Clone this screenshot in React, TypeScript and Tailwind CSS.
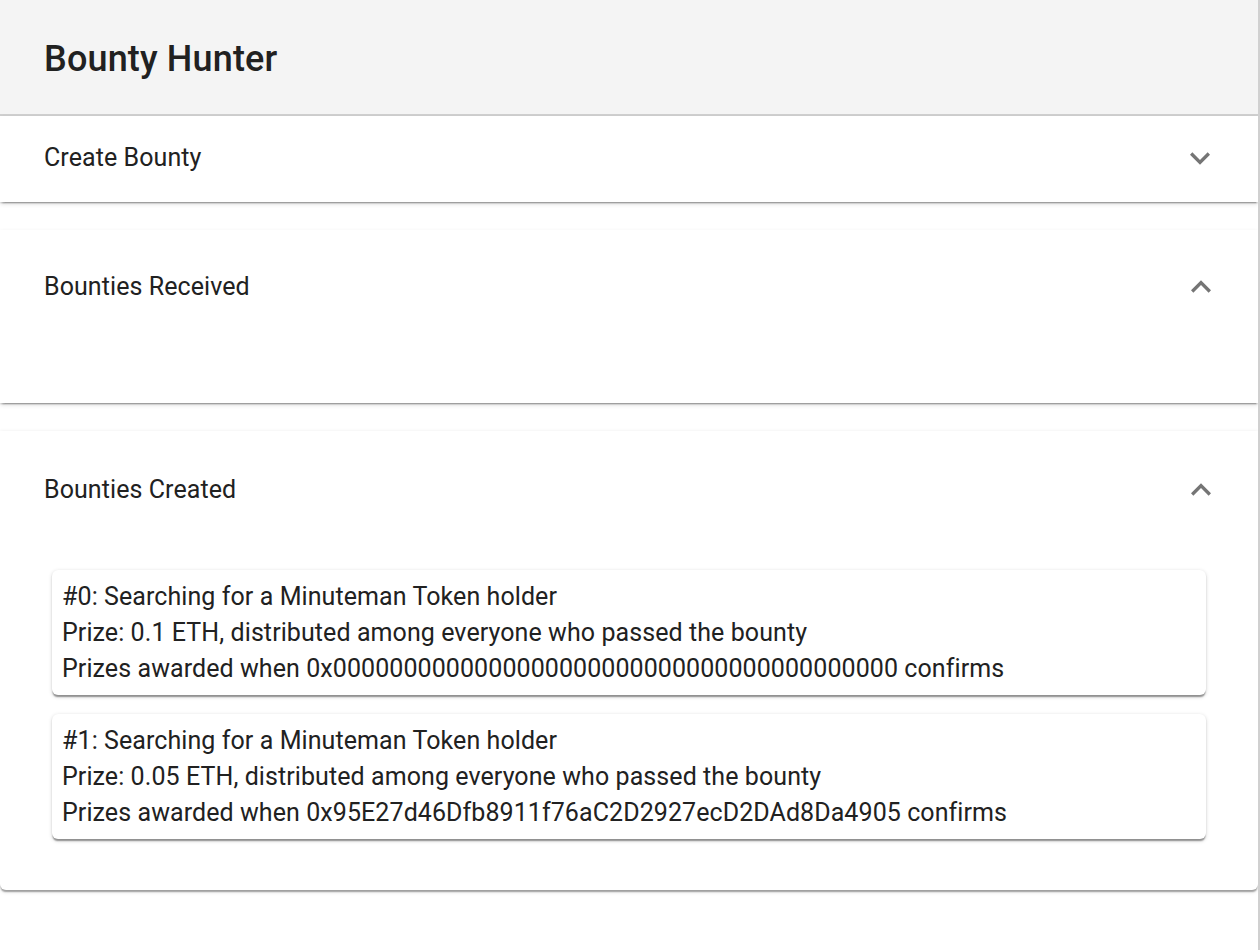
import React from "react";

const ExpandMore = () => (
  <svg viewBox="0 0 24 24" width="40" height="40" fill="#757575" aria-hidden="true">
    <path d="M16.59 8.59 12 13.17 7.41 8.59 6 10l6 6 6-6z" />
  </svg>
);

const ExpandLess = () => (
  <svg viewBox="0 0 24 24" width="40" height="40" fill="#757575" aria-hidden="true">
    <path d="M12 8l-6 6 1.41 1.41L12 10.83l4.59 4.58L18 14z" />
  </svg>
);

const bounties = [
  {
    id: 0,
    prize: "0.1",
    addr: "0x0000000000000000000000000000000000000000",
  },
  {
    id: 1,
    prize: "0.05",
    addr: "0x95E27d46Dfb8911f76aC2D2927ecD2DAd8Da4905",
  },
];

export default function App() {
  return (
    <div className="flex min-h-[950px] bg-white font-['Roboto','Liberation_Sans',sans-serif] text-[#212121]">
      <div className="flex-1 flex flex-col">
        <header className="h-[116px] bg-[#f4f4f4] border-b-2 border-[#d0d0d0] flex items-center px-[44px] pt-[3px]">
          <h1 className="text-[36px] font-medium leading-none tracking-[0.15px]">Bounty Hunter</h1>
        </header>

        <section className="h-[86px] bg-white shadow-[0_3px_1.5px_-1.5px_rgba(0,0,0,0.2),0_1.5px_1.5px_0_rgba(0,0,0,0.14),0_1.5px_4.5px_0_rgba(0,0,0,0.12)] flex items-center justify-between pl-[44px] pr-[38px] pb-[2px]">
          <span className="text-[25px] leading-[36px] tracking-[0.08px]">Create Bounty</span>
          <ExpandMore />
        </section>

        <section className="mt-[28px] h-[173px] bg-white shadow-[0_3px_1.5px_-1.5px_rgba(0,0,0,0.2),0_1.5px_1.5px_0_rgba(0,0,0,0.14),0_1.5px_4.5px_0_rgba(0,0,0,0.12)] pt-[39px] pl-[44px] pr-[37px]">
          <div className="h-[36px] flex items-center justify-between">
            <span className="text-[25px] leading-[36px] tracking-[0.08px]">Bounties Received</span>
            <ExpandLess />
          </div>
        </section>

        <section className="mt-[28px] bg-white rounded-b-[6px] shadow-[0_3px_1.5px_-1.5px_rgba(0,0,0,0.2),0_1.5px_1.5px_0_rgba(0,0,0,0.14),0_1.5px_4.5px_0_rgba(0,0,0,0.12)] pt-[41px] pb-[51px]">
          <div className="h-[36px] flex items-center justify-between pl-[44px] pr-[37px]">
            <span className="text-[25px] leading-[36px] tracking-[0.08px]">Bounties Created</span>
            <ExpandLess />
          </div>
          <div className="mt-[62px] px-[52px] flex flex-col gap-[19px]">
            {bounties.map((b) => (
              <div
                key={b.id}
                className="bg-white rounded-[6px] shadow-[0_3px_1.5px_-1.5px_rgba(0,0,0,0.25),0_1.5px_1.5px_0_rgba(0,0,0,0.16),0_1.5px_4.5px_0_rgba(0,0,0,0.14)] pl-[10px] pt-[9px] pb-[8px] text-[25px] leading-[36px] tracking-[0.08px]"
              >
                <div>#{b.id}: Searching for a Minuteman Token holder</div>
                <div>Prize: {b.prize} ETH, distributed among everyone who passed the bounty</div>
                <div>Prizes awarded when {b.addr} confirms</div>
              </div>
            ))}
          </div>
        </section>
      </div>
      <div className="w-[2px] bg-[#d0d0d0]" />
    </div>
  );
}
